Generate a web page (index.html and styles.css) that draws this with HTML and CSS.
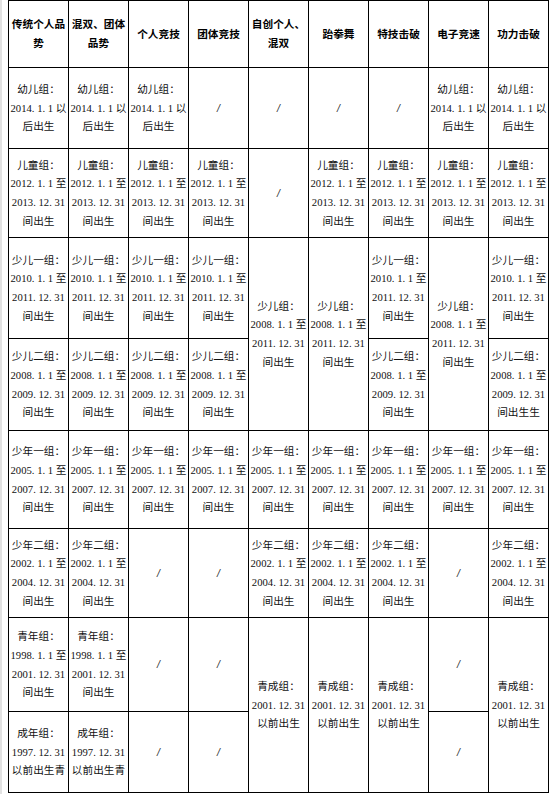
FILE: index.html
```html
<!DOCTYPE html>
<html lang="zh-CN">
<head>
<meta charset="utf-8">
<title>组别年龄表</title>
<link rel="stylesheet" href="styles.css">
</head>
<body>
<div class="sheet">
  <div class="grid">
    <div class="cell head">传统个人品<br>势</div>
    <div class="cell head">混双、团体<br>品势</div>
    <div class="cell head">个人竞技</div>
    <div class="cell head">团体竞技</div>
    <div class="cell head">自创个人、<br>混双</div>
    <div class="cell head">跆拳舞</div>
    <div class="cell head">特技击破</div>
    <div class="cell head">电子竞速</div>
    <div class="cell head">功力击破</div>

    <div class="cell">幼儿组：<br>2014. 1. 1 以<br>后出生</div>
    <div class="cell">幼儿组：<br>2014. 1. 1 以<br>后出生</div>
    <div class="cell">幼儿组：<br>2014. 1. 1 以<br>后出生</div>
    <div class="cell slash">/</div>
    <div class="cell slash">/</div>
    <div class="cell slash">/</div>
    <div class="cell slash">/</div>
    <div class="cell">幼儿组：<br>2014. 1. 1 以<br>后出生</div>
    <div class="cell">幼儿组：<br>2014. 1. 1 以<br>后出生</div>

    <div class="cell">儿童组：<br>2012. 1. 1 至<br>2013. 12. 31<br>间出生</div>
    <div class="cell">儿童组：<br>2012. 1. 1 至<br>2013. 12. 31<br>间出生</div>
    <div class="cell">儿童组：<br>2012. 1. 1 至<br>2013. 12. 31<br>间出生</div>
    <div class="cell">儿童组：<br>2012. 1. 1 至<br>2013. 12. 31<br>间出生</div>
    <div class="cell slash">/</div>
    <div class="cell">儿童组：<br>2012. 1. 1 至<br>2013. 12. 31<br>间出生</div>
    <div class="cell">儿童组：<br>2012. 1. 1 至<br>2013. 12. 31<br>间出生</div>
    <div class="cell">儿童组：<br>2012. 1. 1 至<br>2013. 12. 31<br>间出生</div>
    <div class="cell">儿童组：<br>2012. 1. 1 至<br>2013. 12. 31<br>间出生</div>

    <div class="cell">少儿一组：<br>2010. 1. 1 至<br>2011. 12. 31<br>间出生</div>
    <div class="cell">少儿一组：<br>2010. 1. 1 至<br>2011. 12. 31<br>间出生</div>
    <div class="cell">少儿一组：<br>2010. 1. 1 至<br>2011. 12. 31<br>间出生</div>
    <div class="cell">少儿一组：<br>2010. 1. 1 至<br>2011. 12. 31<br>间出生</div>
    <div class="cell span2">少儿组：<br>2008. 1. 1 至<br>2011. 12. 31<br>间出生</div>
    <div class="cell span2">少儿组：<br>2008. 1. 1 至<br>2011. 12. 31<br>间出生</div>
    <div class="cell">少儿一组：<br>2010. 1. 1 至<br>2011. 12. 31<br>间出生</div>
    <div class="cell span2">少儿组：<br>2008. 1. 1 至<br>2011. 12. 31<br>间出生</div>
    <div class="cell">少儿一组：<br>2010. 1. 1 至<br>2011. 12. 31<br>间出生</div>

    <div class="cell">少儿二组：<br>2008. 1. 1 至<br>2009. 12. 31<br>间出生</div>
    <div class="cell">少儿二组：<br>2008. 1. 1 至<br>2009. 12. 31<br>间出生</div>
    <div class="cell">少儿二组：<br>2008. 1. 1 至<br>2009. 12. 31<br>间出生</div>
    <div class="cell">少儿二组：<br>2008. 1. 1 至<br>2009. 12. 31<br>间出生</div>
    <div class="cell">少儿二组：<br>2008. 1. 1 至<br>2009. 12. 31<br>间出生</div>
    <div class="cell">少儿二组：<br>2008. 1. 1 至<br>2009. 12. 31<br>间出生生</div>

    <div class="cell">少年一组：<br>2005. 1. 1 至<br>2007. 12. 31<br>间出生</div>
    <div class="cell">少年一组：<br>2005. 1. 1 至<br>2007. 12. 31<br>间出生</div>
    <div class="cell">少年一组：<br>2005. 1. 1 至<br>2007. 12. 31<br>间出生</div>
    <div class="cell">少年一组：<br>2005. 1. 1 至<br>2007. 12. 31<br>间出生</div>
    <div class="cell">少年一组：<br>2005. 1. 1 至<br>2007. 12. 31<br>间出生</div>
    <div class="cell">少年一组：<br>2005. 1. 1 至<br>2007. 12. 31<br>间出生</div>
    <div class="cell">少年一组：<br>2005. 1. 1 至<br>2007. 12. 31<br>间出生</div>
    <div class="cell">少年一组：<br>2005. 1. 1 至<br>2007. 12. 31<br>间出生</div>
    <div class="cell">少年一组：<br>2005. 1. 1 至<br>2007. 12. 31<br>间出生</div>

    <div class="cell">少年二组：<br>2002. 1. 1 至<br>2004. 12. 31<br>间出生</div>
    <div class="cell">少年二组：<br>2002. 1. 1 至<br>2004. 12. 31<br>间出生</div>
    <div class="cell slash">/</div>
    <div class="cell slash">/</div>
    <div class="cell">少年二组：<br>2002. 1. 1 至<br>2004. 12. 31<br>间出生</div>
    <div class="cell">少年二组：<br>2002. 1. 1 至<br>2004. 12. 31<br>间出生</div>
    <div class="cell">少年二组：<br>2002. 1. 1 至<br>2004. 12. 31<br>间出生</div>
    <div class="cell slash">/</div>
    <div class="cell">少年二组：<br>2002. 1. 1 至<br>2004. 12. 31<br>间出生</div>

    <div class="cell">青年组：<br>1998. 1. 1 至<br>2001. 12. 31<br>间出生</div>
    <div class="cell">青年组：<br>1998. 1. 1 至<br>2001. 12. 31<br>间出生</div>
    <div class="cell slash">/</div>
    <div class="cell slash">/</div>
    <div class="cell span2">青成组：<br>2001. 12. 31<br>以前出生</div>
    <div class="cell span2">青成组：<br>2001. 12. 31<br>以前出生</div>
    <div class="cell span2">青成组：<br>2001. 12. 31<br>以前出生</div>
    <div class="cell slash">/</div>
    <div class="cell span2">青成组：<br>2001. 12. 31<br>以前出生</div>

    <div class="cell">成年组：<br>1997. 12. 31<br>以前出生青</div>
    <div class="cell">成年组：<br>1997. 12. 31<br>以前出生青</div>
    <div class="cell slash">/</div>
    <div class="cell slash">/</div>
    <div class="cell slash">/</div>
  </div>
</div>
</body>
</html>
```

FILE: styles.css
```css
html, body {
  margin: 0;
  padding: 0;
  background: #fff;
}

body {
  background: linear-gradient(to right, #e2e2e2 0, #e2e2e2 2px, #fff 2px);
  min-height: 794px;
}

.sheet {
  padding-left: 8px;
}

.grid {
  display: grid;
  grid-template-columns: repeat(9, 59px);
  grid-template-rows: 66px 80px 88px 100px 91px 97px 88px 93px 80px;
  gap: 1px;
  width: max-content;
  background: #000;
  border: 1px solid #000;
  font-family: "Liberation Serif", "Noto Sans CJK SC", serif;
  font-size: 10.67px;
  line-height: 18.67px;
  color: #111;
}

.cell {
  background: #fff;
  display: flex;
  align-items: center;
  justify-content: center;
  text-align: center;
  white-space: nowrap;
}

.head {
  font-weight: bold;
  color: #000;
}

.span2 {
  grid-row: span 2;
}

.slash {
  font-family: "Liberation Sans", sans-serif;
  font-style: italic;
  color: #333;
}
```
